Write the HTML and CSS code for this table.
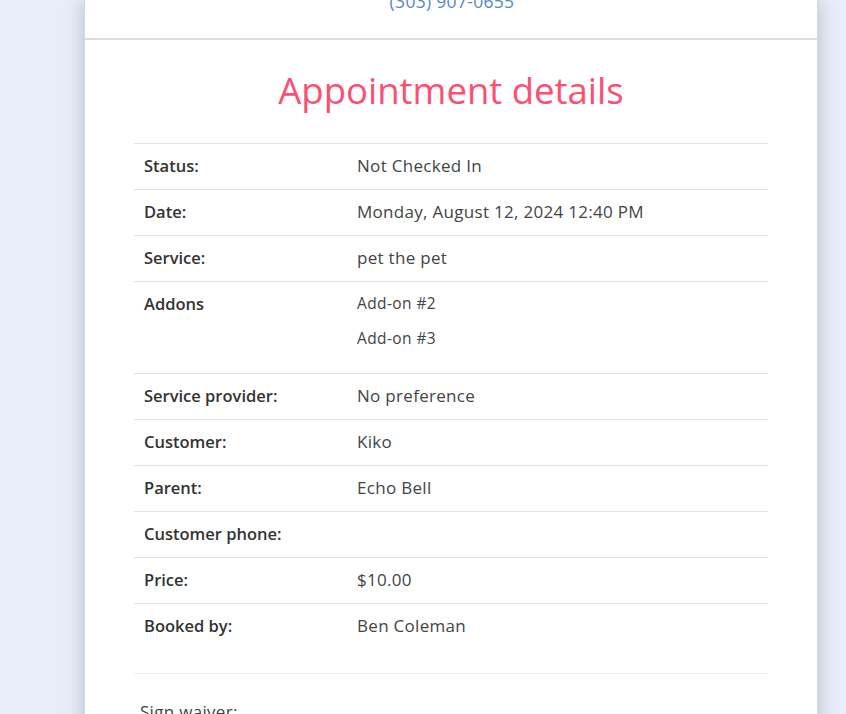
FILE: index.html
```html
<!DOCTYPE html>
<html>
<head>
<meta charset="utf-8">
<link rel="stylesheet" href="styles.css">
</head>
<body>
<div class="page">
  <div class="card">
    <div class="header">
      <div class="phone">(303) 907-0655</div>
    </div>
    <div class="content">
      <h1 class="title">Appointment details</h1>
      <div class="details">
        <div class="row"><div class="label">Status:</div><div class="value">Not Checked In</div></div>
        <div class="row"><div class="label">Date:</div><div class="value">Monday, August 12, 2024 12:40 PM</div></div>
        <div class="row"><div class="label">Service:</div><div class="value">pet the pet</div></div>
        <div class="row row-list"><div class="label">Addons</div>
          <div class="value">
            <div class="addon">Add-on #2</div>
            <div class="addon">Add-on #3</div>
          </div>
        </div>
        <div class="row"><div class="label">Service provider:</div><div class="value">No preference</div></div>
        <div class="row"><div class="label">Customer:</div><div class="value">Kiko</div></div>
        <div class="row"><div class="label">Parent:</div><div class="value">Echo Bell</div></div>
        <div class="row"><div class="label">Customer phone:</div><div class="value"></div></div>
        <div class="row"><div class="label">Price:</div><div class="value">$10.00</div></div>
        <div class="row"><div class="label">Booked by:</div><div class="value">Ben Coleman</div></div>
      </div>
      <div class="sep"></div>
      <div class="waiver">Sign waiver:</div>
    </div>
  </div>
</div>
</body>
</html>
```

FILE: styles.css
```css
html, body {
  margin: 0;
  padding: 0;
  height: 100%;
  overflow: hidden;
}
body {
  background: #e8eef8;
  font-family: "Open Sans", "Liberation Sans", sans-serif;
  color: #333;
}
.page {
  padding-left: 84px;
}
.card {
  width: 732px;
  background: #fff;
  border-left: 1px solid #d6d9de;
  border-right: 1px solid #d6d9de;
  box-shadow: 0 0 18px rgba(80, 95, 120, 0.35);
  min-height: 760px;
}
.header {
  height: 38px;
  border-bottom: 2px solid #dcdcdc;
  overflow: hidden;
}
.phone {
  margin-top: -10px;
  text-align: center;
  font-size: 17.5px;
  letter-spacing: 0.3px;
  line-height: 22px;
  color: #5a86c5;
  padding-left: 2px;
}
.content {
  padding: 0 49px;
}
.title {
  margin: 0;
  padding-top: 27px;
  height: 74px;
  box-sizing: border-box;
  text-align: center;
  font-weight: 400;
  font-size: 36.5px;
  line-height: 46px;
  color: #fc4f72;
}
.details {
  margin-top: 29px;
}
.row {
  display: grid;
  grid-template-columns: 213px 1fr;
  border-top: 1px solid #e3e3e3;
  padding: 11px 0 13px;
  line-height: 21px;
}
.label {
  padding-left: 10px;
  font-size: 16.5px;
  font-weight: 600;
  color: #333;
}
.value {
  padding-left: 10px;
  font-size: 17px;
  letter-spacing: 0.3px;
  color: #444;
}
.row-list .addon {
  font-size: 15.5px;
  letter-spacing: 0.4px;
  line-height: 20px;
  margin-bottom: 15px;
}
.row-list .addon:last-child {
  margin-bottom: 12px;
}
.row-list .label {
  line-height: 22px;
}
.sep {
  margin-top: 24px;
  border-top: 1px solid #eeeeee;
}
.waiver {
  padding-left: 6px;
  margin-top: 27px;
  font-size: 17px;
  letter-spacing: 0.3px;
  line-height: 22px;
  color: #444;
}
```
